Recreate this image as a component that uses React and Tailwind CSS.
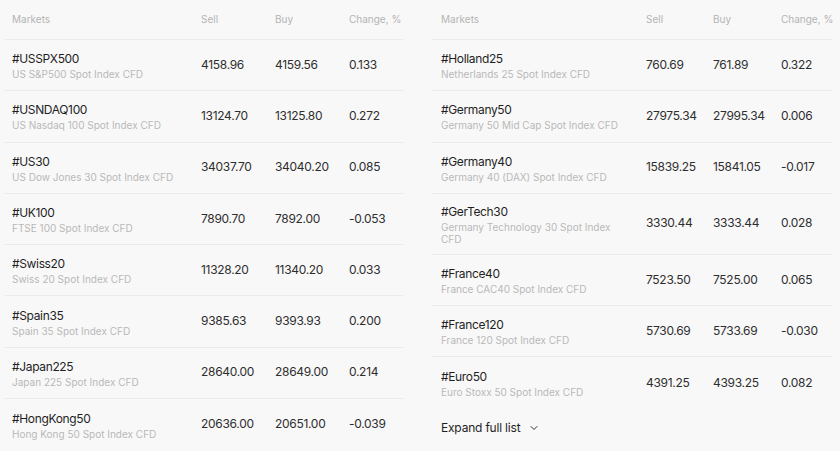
import React from "react";
import { ChevronDown } from "lucide-react";

const left = [
    { t: "#USSPX500", d: "US S&P500 Spot Index CFD", s: "4158.96", b: "4159.56", c: "0.133" },
    { t: "#USNDAQ100", d: "US Nasdaq 100 Spot Index CFD", s: "13124.70", b: "13125.80", c: "0.272" },
    { t: "#US30", d: "US Dow Jones 30 Spot Index CFD", s: "34037.70", b: "34040.20", c: "0.085" },
    { t: "#UK100", d: "FTSE 100 Spot Index CFD", s: "7890.70", b: "7892.00", c: "-0.053" },
    { t: "#Swiss20", d: "Swiss 20 Spot Index CFD", s: "11328.20", b: "11340.20", c: "0.033" },
    { t: "#Spain35", d: "Spain 35 Spot Index CFD", s: "9385.63", b: "9393.93", c: "0.200" },
    { t: "#Japan225", d: "Japan 225 Spot Index CFD", s: "28640.00", b: "28649.00", c: "0.214" },
    { t: "#HongKong50", d: "Hong Kong 50 Spot Index CFD", s: "20636.00", b: "20651.00", c: "-0.039" },
];

const right = [
    { t: "#Holland25", d: "Netherlands 25 Spot Index CFD", s: "760.69", b: "761.89", c: "0.322" },
    { t: "#Germany50", d: "Germany 50 Mid Cap Spot Index CFD", s: "27975.34", b: "27995.34", c: "0.006" },
    { t: "#Germany40", d: "Germany 40 (DAX) Spot Index CFD", s: "15839.25", b: "15841.05", c: "-0.017" },
    { t: "#GerTech30", d: "Germany Technology 30 Spot Index CFD", s: "3330.44", b: "3333.44", c: "0.028" },
    { t: "#France40", d: "France CAC40 Spot Index CFD", s: "7523.50", b: "7525.00", c: "0.065" },
    { t: "#France120", d: "France 120 Spot Index CFD", s: "5730.69", b: "5733.69", c: "-0.030" },
    { t: "#Euro50", d: "Euro Stoxx 50 Spot Index CFD", s: "4391.25", b: "4393.25", c: "0.082" },
];

function MarketTable({ rows, cols, pad, descW }) {
    return (
        <div className="w-[400px] shrink-0">
            <div
                className={`grid ${cols} ${pad} h-[40px] items-center border-b border-[#ececec] text-[10px] text-[#b4b4b4] whitespace-nowrap`}
            >
                <div>Markets</div>
                <div>Sell</div>
                <div>Buy</div>
                <div>Change, %</div>
            </div>
            {rows.map((r, i) => (
                <div
                    key={r.t}
                    className={`grid ${cols} ${pad} items-center ${
                        i < rows.length - 1 ? "border-b border-[#ececec]" : ""
                    } ${r.t === "#GerTech30" ? "h-[61px]" : "h-[51.3px]"}`}
                >
                    <div className="pt-[1px]">
                        <div className="text-[12px] leading-[16px] tracking-[-0.35px] text-[#1f1f1f]">{r.t}</div>
                        <div className={`${descW} mt-[1px] text-[10px] leading-[12px] text-[#b8b8b8]`}>{r.d}</div>
                    </div>
                    <div className="pb-[1px] text-[12px] tracking-[-0.3px] text-[#2e2e2e]">{r.s}</div>
                    <div className="pb-[1px] text-[12px] tracking-[-0.3px] text-[#2e2e2e]">{r.b}</div>
                    <div className="pb-[1px] text-[12px] tracking-[-0.3px] text-[#2e2e2e]">{r.c}</div>
                </div>
            ))}
        </div>
    );
}

export default function App() {
    return (
        <div
            className="w-[840px] h-[451px] overflow-hidden bg-[#f8f8f8] flex gap-[28px] pl-[4px]"
            style={{ fontFamily: "Inter, 'Liberation Sans', sans-serif" }}
        >
            <MarketTable
                rows={left}
                cols="grid-cols-[189px_74px_74px_1fr]"
                pad="pl-[8px]"
                descW="w-[180px]"
            />
            <div>
                <MarketTable
                    rows={right}
                    cols="grid-cols-[205px_67px_68px_1fr]"
                    pad="pl-[9px]"
                    descW="w-[185px]"
                />
                <button className="flex items-center gap-[8px] pl-[9px] mt-[10px] text-[12px] tracking-[-0.2px] text-[#1f1f1f]">
                    Expand full list
                    <ChevronDown className="w-[12px] h-[12px] text-[#333]" strokeWidth={2} />
                </button>
            </div>
        </div>
    );
}
